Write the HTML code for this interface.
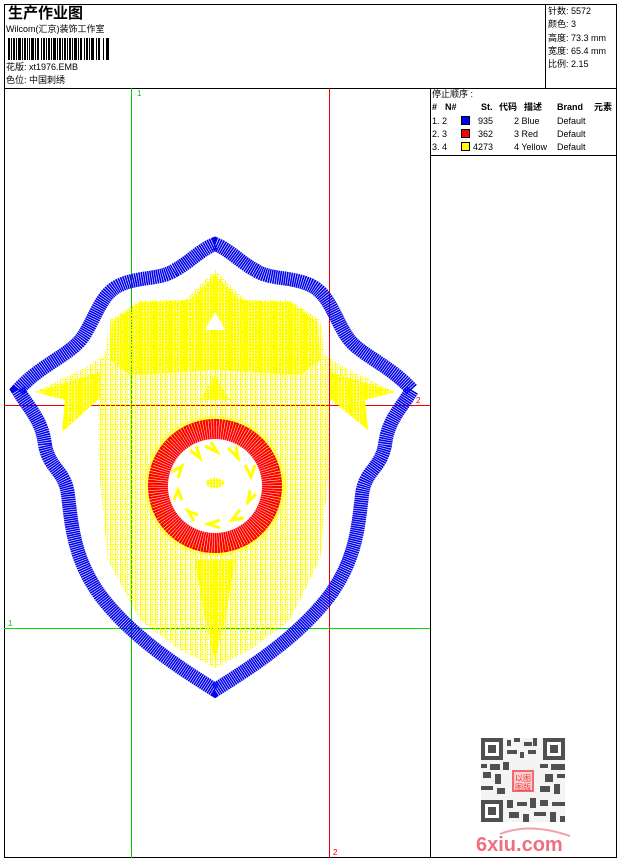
<!DOCTYPE html>
<html><head><meta charset="utf-8"><style>
body{margin:0;background:#fff;width:620px;height:860px;overflow:hidden;font-family:"Liberation Sans","Noto Sans CJK SC",sans-serif;color:#000}
.t{position:absolute;white-space:nowrap;font-size:9px;line-height:11px}
</style></head><body>
<svg width="620" height="860" style="position:absolute;left:0;top:0">
<defs>
<pattern id="yp" width="3" height="3" patternUnits="userSpaceOnUse"><rect width="2" height="3" fill="#ff0"/><rect x="2" width="1" height="1" fill="#ff0"/></pattern>
<pattern id="yp2" width="5" height="5" patternUnits="userSpaceOnUse"><rect width="1" height="5" fill="#ff0"/><rect x="2" y="1" width="1" height="2" fill="#ff0"/><rect y="4" width="4" height="1" fill="#ff0"/></pattern>
</defs>
<rect x="4.5" y="4.5" width="612" height="853" fill="none" stroke="#000"/>
<line x1="4" y1="88.5" x2="617" y2="88.5" stroke="#000"/>
<line x1="545.5" y1="4" x2="545.5" y2="88" stroke="#000"/>
<line x1="430.5" y1="88" x2="430.5" y2="858" stroke="#000"/>
<line x1="430" y1="155.5" x2="617" y2="155.5" stroke="#000"/>
<g fill="#000">
<rect x="8" y="38" width="2" height="22"/><rect x="11" y="38" width="1" height="22"/><rect x="13" y="38" width="2" height="22"/><rect x="16" y="38" width="1" height="22"/><rect x="18" y="38" width="3" height="22"/><rect x="22" y="38" width="1" height="22"/><rect x="24" y="38" width="2" height="22"/><rect x="27" y="38" width="1" height="22"/><rect x="29" y="38" width="1" height="22"/><rect x="31" y="38" width="3" height="22"/><rect x="35" y="38" width="1" height="22"/><rect x="37" y="38" width="2" height="22"/><rect x="41" y="38" width="1" height="22"/><rect x="43" y="38" width="2" height="22"/><rect x="46" y="38" width="1" height="22"/><rect x="48" y="38" width="2" height="22"/><rect x="51" y="38" width="1" height="22"/><rect x="53" y="38" width="3" height="22"/><rect x="57" y="38" width="1" height="22"/><rect x="59" y="38" width="2" height="22"/><rect x="62" y="38" width="1" height="22"/><rect x="64" y="38" width="2" height="22"/><rect x="67" y="38" width="1" height="22"/><rect x="69" y="38" width="2" height="22"/><rect x="72" y="38" width="1" height="22"/><rect x="74" y="38" width="3" height="22"/><rect x="78" y="38" width="1" height="22"/><rect x="80" y="38" width="2" height="22"/><rect x="84" y="38" width="1" height="22"/><rect x="86" y="38" width="2" height="22"/><rect x="89" y="38" width="1" height="22"/><rect x="91" y="38" width="3" height="22"/><rect x="96" y="38" width="1" height="22"/><rect x="98" y="38" width="2" height="22"/><rect x="103" y="38" width="1" height="22"/><rect x="106" y="38" width="3" height="22"/>
</g>
<line x1="131.5" y1="88" x2="131.5" y2="858" stroke="#0c0"/>
<line x1="329.5" y1="88" x2="329.5" y2="858" stroke="#e00"/>
<line x1="4" y1="405.5" x2="430" y2="405.5" stroke="#e00"/>
<line x1="4" y1="628.5" x2="430" y2="628.5" stroke="#0d0"/>
<text x="137" y="96" font-size="8" fill="#0c0" font-family="Liberation Sans">1</text>
<text x="8" y="626" font-size="8" fill="#0c0" font-family="Liberation Sans">1</text>
<text x="333" y="855" font-size="8" fill="#e00" font-family="Liberation Sans">2</text>
<text x="416" y="403" font-size="8" fill="#e00" font-family="Liberation Sans">2</text>
<g>
<path d="M215,270 L245,300 L290,300 L320,320 L325,355 L345,368 L395,392 L365,400 L368,430 L330,400 L330,460 L320,560 L290,620 L250,650 L215,668 L180,650 L140,620 L108,560 L98,460 L98,400 L62,432 L65,400 L35,392 L85,368 L105,355 L110,320 L140,300 L185,300 Z" fill="url(#yp2)"/>
<path d="M215,275 L240,300 L290,302 L318,322 L320,360 L300,375 L215,370 L130,375 L110,360 L112,322 L140,302 L190,300 Z" fill="url(#yp)"/>
<path d="M100,372 L35,392 L65,400 L62,432 L100,398 Z M330,372 L395,392 L365,400 L368,430 L330,398 Z" fill="url(#yp)"/>
<path d="M215,312 L205,330 L225,330 Z" fill="#fff"/>
<path d="M215,375 L200,400 L230,400 Z" fill="url(#yp)"/>
<path d="M195,560 L235,560 L225,620 L215,660 L205,620 Z" fill="url(#yp)"/>
<path d="M140,420 L130,480 L140,560 L175,610 L215,630 L255,610 L290,560 L300,480 L290,420 L250,400 L180,400 Z" fill="url(#yp2)"/>
</g>
<circle cx="215" cy="486" r="68" fill="none" stroke="#ff0" stroke-width="4" stroke-dasharray="1 1"/>
<circle cx="215" cy="486" r="57" fill="#fff" stroke="#f00" stroke-width="20" stroke-dasharray="2 0.5"/>
<circle cx="215" cy="486" r="66" fill="none" stroke="#e00" stroke-width="1.5" stroke-dasharray="1 3"/>
<g stroke="#ff0" stroke-width="3" fill="none">
<path d="M190,450 l10,8 l-4,-12 M205,446 l12,6 l-6,-10 M228,448 l10,10 l-2,-12 M245,465 l6,12 l4,-12 M250,490 l-2,12 l8,-8 M240,510 l-8,10 l12,-2 M220,520 l-12,4 l12,4 M198,515 l-10,-4 l6,10 M182,500 l-4,-10 l-4,10 M178,478 l4,-12 l-10,6"/>
</g>
<ellipse cx="215" cy="483" rx="9" ry="5" fill="url(#yp)"/>
<path d="M215,244 C200,250 190,262 175,270 C160,280 140,276 120,285 C100,294 95,320 82,338 C70,355 40,365 18,390 C30,410 42,420 45,445 C50,470 65,470 68,495 C72,530 75,560 100,595 C130,635 175,665 215,690 C255,665 300,635 330,595 C355,560 358,530 362,495 C365,470 380,470 385,445 C388,420 400,410 412,390 C390,365 360,355 348,338 C335,320 330,294 310,285 C290,276 270,280 255,270 C240,262 230,250 215,244 Z" fill="none" stroke="#0000f0" stroke-width="14" stroke-dasharray="1.6 0.6"/>
<g fill="#505050">
<rect x="481" y="738" width="84" height="84" fill="#f4f4f4"/>
<rect x="481" y="738" width="22" height="22"/><rect x="485" y="742" width="14" height="14" fill="#fff"/><rect x="488" y="745" width="8" height="8"/>
<rect x="543" y="738" width="22" height="22"/><rect x="547" y="742" width="14" height="14" fill="#fff"/><rect x="550" y="745" width="8" height="8"/>
<rect x="481" y="800" width="22" height="22"/><rect x="485" y="804" width="14" height="14" fill="#fff"/><rect x="488" y="807" width="8" height="8"/>
<rect x="507" y="740" width="4" height="6"/><rect x="514" y="738" width="6" height="4"/><rect x="524" y="742" width="8" height="4"/><rect x="533" y="738" width="4" height="8"/><rect x="507" y="750" width="10" height="4"/><rect x="520" y="752" width="4" height="6"/><rect x="528" y="750" width="8" height="4"/>
<rect x="481" y="764" width="6" height="4"/><rect x="490" y="764" width="10" height="6"/><rect x="503" y="762" width="6" height="8"/><rect x="540" y="764" width="8" height="4"/><rect x="551" y="764" width="14" height="6"/>
<rect x="483" y="772" width="8" height="6"/><rect x="495" y="774" width="6" height="10"/><rect x="545" y="774" width="8" height="8"/><rect x="557" y="774" width="8" height="4"/>
<rect x="481" y="786" width="12" height="4"/><rect x="497" y="788" width="8" height="6"/><rect x="540" y="786" width="10" height="6"/><rect x="554" y="784" width="6" height="10"/>
<rect x="507" y="800" width="6" height="8"/><rect x="517" y="802" width="10" height="4"/><rect x="530" y="798" width="6" height="10"/><rect x="540" y="800" width="8" height="6"/><rect x="552" y="802" width="13" height="4"/>
<rect x="509" y="812" width="10" height="6"/><rect x="523" y="814" width="6" height="8"/><rect x="534" y="812" width="12" height="4"/><rect x="550" y="812" width="6" height="10"/><rect x="560" y="816" width="5" height="6"/>
</g>
<rect x="512" y="770" width="22" height="22" fill="#f26a6a"/>
<rect x="514" y="772" width="18" height="18" fill="#fbd2d2"/>
<text x="515" y="781" font-size="8" fill="#e33" font-family="Noto Sans CJK SC">以图</text>
<text x="515" y="790" font-size="8" fill="#e33" font-family="Noto Sans CJK SC">图版</text>
<path d="M500,834 Q530,822 570,836" stroke="#f4a0a8" stroke-width="2" fill="none"/>
<text x="476" y="851" font-size="20" font-weight="bold" fill="#ee7080" font-family="Liberation Sans">6xiu.com</text>
</svg>
<div class="t" style="left:8px;top:5px;font-size:15px;line-height:17px;font-weight:bold">生产作业图</div>
<div class="t" style="left:6px;top:24px">Wilcom(汇京)装饰工作室</div>
<div class="t" style="left:6px;top:62px">花版: xt1976.EMB</div>
<div class="t" style="left:6px;top:75px">色位: 中国刺绣</div>
<div class="t" style="left:548px;top:5px;line-height:13.3px">针数: 5572<br>颜色: 3<br>高度: 73.3 mm<br>宽度: 65.4 mm<br>比例: 2.15</div>
<div class="t" style="left:432px;top:89px">停止顺序 :</div>
<div class="t" style="left:432px;top:102px;font-weight:bold;text-decoration:underline">
<span style="position:absolute;left:0">#</span><span style="position:absolute;left:13px">N#</span><span style="position:absolute;left:49px">St.</span><span style="position:absolute;left:67px">代码</span><span style="position:absolute;left:92px">描述</span><span style="position:absolute;left:125px">Brand</span><span style="position:absolute;left:162px">元素</span></div>
<div class="t" style="left:432px;top:116px">1. 2</div><div class="t" style="left:461px;top:116px;width:9px;height:9px;background:#00f;border:1px solid #000;box-sizing:border-box"></div><div class="t" style="left:478px;top:116px">935</div><div class="t" style="left:514px;top:116px">2 Blue</div><div class="t" style="left:557px;top:116px">Default</div>
<div class="t" style="left:432px;top:129px">2. 3</div><div class="t" style="left:461px;top:129px;width:9px;height:9px;background:#f00;border:1px solid #000;box-sizing:border-box"></div><div class="t" style="left:478px;top:129px">362</div><div class="t" style="left:514px;top:129px">3 Red</div><div class="t" style="left:557px;top:129px">Default</div>
<div class="t" style="left:432px;top:142px">3. 4</div><div class="t" style="left:461px;top:142px;width:9px;height:9px;background:#ff0;border:1px solid #000;box-sizing:border-box"></div><div class="t" style="left:473px;top:142px">4273</div><div class="t" style="left:514px;top:142px">4 Yellow</div><div class="t" style="left:557px;top:142px">Default</div>
</body></html>
